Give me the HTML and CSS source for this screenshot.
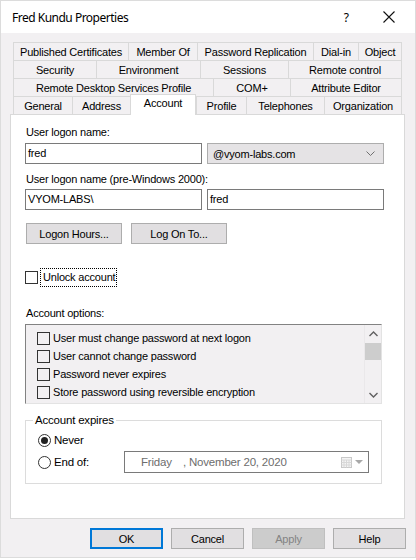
FILE: index.html
```html
<html>
<head>
    <title>Fred Kundu Properties</title>
    <link rel="stylesheet" href="styles.css">
</head>
<body>
<div class="window">
    <div class="titlebar">
        <span class="title">Fred Kundu Properties</span>
        <span class="help-btn">?</span>
        <span class="close-btn">
            <svg width="12" height="12" viewBox="0 0 12 12"><path d="M0.5 0.5 L11.5 11.5 M11.5 0.5 L0.5 11.5" stroke="#111" stroke-width="1.1" fill="none"/></svg>
        </span>
    </div>

    <div class="client">
        <div class="tabs">
            <div class="tab-row">
                <div class="tab t-pubcert">Published Certificates</div>
                <div class="tab t-member">Member Of</div>
                <div class="tab t-pwrepl">Password Replication</div>
                <div class="tab t-dialin">Dial-in</div>
                <div class="tab t-object">Object</div>
            </div>
            <div class="tab-row">
                <div class="tab t-security">Security</div>
                <div class="tab t-env">Environment</div>
                <div class="tab t-sessions">Sessions</div>
                <div class="tab t-remote">Remote control</div>
            </div>
            <div class="tab-row">
                <div class="tab t-rdsp">Remote Desktop Services Profile</div>
                <div class="tab t-com">COM+</div>
                <div class="tab t-attr">Attribute Editor</div>
            </div>
            <div class="tab-row">
                <div class="tab t-general">General</div>
                <div class="tab t-address">Address</div>
                <div class="tab t-account selected">Account</div>
                <div class="tab t-profile">Profile</div>
                <div class="tab t-phones">Telephones</div>
                <div class="tab t-org">Organization</div>
            </div>
        </div>

        <div class="panel">
            <div class="label first">User logon name:</div>
            <div class="field-row">
                <div class="textbox">fred</div>
                <div class="combo">
                    <span>@vyom-labs.com</span>
                    <svg width="9" height="5" viewBox="0 0 9 5"><path d="M0.5 0.5 L4.5 4.5 L8.5 0.5" stroke="#707070" fill="none"/></svg>
                </div>
            </div>

            <div class="label second">User logon name (pre-Windows 2000):</div>
            <div class="field-row tight">
                <div class="textbox">VYOM-LABS\</div>
                <div class="textbox">fred</div>
            </div>

            <div class="btn-row">
                <div class="btn">Logon Hours...</div>
                <div class="btn">Log On To...</div>
            </div>

            <div class="unlock">
                <span class="check"></span>
                <span class="focus-text">Unlock account</span>
            </div>

            <div class="label options">Account options:</div>
            <div class="listbox">
                <div class="list-items">
                    <div class="list-item"><span class="check"></span>User must change password at next logon</div>
                    <div class="list-item"><span class="check"></span>User cannot change password</div>
                    <div class="list-item"><span class="check"></span>Password never expires</div>
                    <div class="list-item"><span class="check"></span>Store password using reversible encryption</div>
                </div>
                <div class="scrollbar">
                    <div class="arrow">
                        <svg width="9" height="6" viewBox="0 0 9 6"><path d="M0.5 5 L4.5 1 L8.5 5" stroke="#606060" stroke-width="1.4" fill="none"/></svg>
                    </div>
                    <div class="thumb"></div>
                    <div class="track"></div>
                    <div class="arrow">
                        <svg width="9" height="6" viewBox="0 0 9 6"><path d="M0.5 1 L4.5 5 L8.5 1" stroke="#606060" stroke-width="1.4" fill="none"/></svg>
                    </div>
                </div>
            </div>

            <fieldset class="expires">
                <legend>Account expires</legend>
                <div class="radio-row">
                    <span class="radio on"></span>Never
                </div>
                <div class="radio-row end">
                    <span class="radio"></span><span class="end-label">End of:</span>
                    <div class="datepicker">
                        <span class="day">Friday</span>
                        <span class="date">, November 20, 2020</span>
                        <span class="cal">
                            <svg width="11" height="11" viewBox="0 0 11 11">
                                <rect x="0.5" y="0.5" width="10" height="10" fill="#f4f4f4" stroke="#c8c8c8"/>
                                <path d="M0.5 3 H10.5 M0.5 5.5 H10.5 M0.5 8 H10.5 M3 3 V10.5 M5.5 3 V10.5 M8 3 V10.5" stroke="#d8d8d8" fill="none"/>
                            </svg>
                        </span>
                        <span class="drop"></span>
                    </div>
                </div>
            </fieldset>
        </div>

        <div class="dialog-buttons">
            <div class="btn wide default">OK</div>
            <div class="btn wide">Cancel</div>
            <div class="btn wide disabled">Apply</div>
            <div class="btn wide">Help</div>
        </div>
    </div>
</div>
</body>
</html>
```

FILE: styles.css
```css
*{
    box-sizing: border-box;
}
body{
    margin: 0;
    background: #ffffff;
    font-family: "Liberation Sans", Arial, sans-serif;
    font-size: 11px;
    letter-spacing: -0.2px;
    color: #000;
}
.window{
    width: 416px;
    height: 558px;
    border: 1px solid #dcdcdc;
    display: flex;
    flex-direction: column;
}
.titlebar{
    height: 32px;
    background: #ffffff;
    display: flex;
    align-items: center;
    font-family: "Noto Sans", sans-serif;
    font-size: 12px;
    letter-spacing: -0.5px;
    color: #000;
}
.title{
    margin-left: 11px;
    flex: 1;
}
.help-btn{
    width: 20px;
    margin-right: 27px;
    text-align: center;
}
.close-btn{
    width: 12px;
    height: 12px;
    margin-right: 20px;
    display: flex;
}
.client{
    flex: 1;
    background: #f2f0f2;
    padding-top: 9px;
    display: flex;
    flex-direction: column;
}

/* tab strip */
.tabs{
    margin-left: 12px;
    width: 389px;
}
.tab-row{
    display: flex;
    height: 18px;
}
.tab{
    height: 18px;
    border-top: 1px solid #d9d9d9;
    border-left: 1px solid #d9d9d9;
    display: flex;
    align-items: center;
    justify-content: center;
    white-space: nowrap;
}
.tab:last-child{
    border-right: 1px solid #d9d9d9;
}
.t-pubcert{ width: 115px; }
.t-member{ width: 69px; }
.t-pwrepl{ width: 116px; }
.t-dialin{ width: 45px; }
.t-object{ width: 44px; }
.t-security{ width: 83px; }
.t-env{ width: 104px; }
.t-sessions{ width: 88px; }
.t-remote{ width: 114px; }
.t-rdsp{ width: 200px; }
.t-com{ width: 77px; }
.t-attr{ width: 112px; }
.t-general{ width: 59px; }
.t-address{ width: 58px; }
.t-account{ width: 66px; }
.t-profile{ width: 50px; }
.t-phones{ width: 78px; }
.t-org{ width: 78px; }
.tab.selected{
    position: relative;
    z-index: 1;
    background: #ffffff;
    height: 21px;
    margin-top: -2px;
    border-right: 1px solid #d9d9d9;
    align-items: flex-start;
    padding-top: 2px;
}

/* account page */
.panel{
    margin-left: 9px;
    width: 395px;
    height: 405px;
    background: #ffffff;
    border: 1px solid #d9d9d9;
    padding-left: 14px;
}
.label{
    line-height: 13px;
    padding-left: 1px;
}
.label.first{ margin-top: 11px; }
.label.second{ margin-top: 9px; }
.label.options{ margin-top: 20px; }
.field-row{
    display: flex;
    gap: 5px;
    margin-top: 4px;
}
.field-row.tight{
    margin-top: 3px;
}
.textbox{
    width: 177px;
    height: 21px;
    border: 1px solid #7a7a7a;
    background: #ffffff;
    padding-left: 2px;
    line-height: 19px;
}
.combo{
    width: 177px;
    height: 21px;
    border: 1px solid #adadad;
    background: #e5e3e5;
    padding: 0 8px 0 5px;
    display: flex;
    align-items: center;
    justify-content: space-between;
}
.btn-row{
    display: flex;
    gap: 9px;
    margin-top: 13px;
    padding-left: 1px;
}
.btn{
    width: 96px;
    height: 21px;
    border: 1px solid #adadad;
    background: #e1dfe1;
    display: flex;
    align-items: center;
    justify-content: center;
}
.unlock{
    display: flex;
    align-items: center;
    margin-top: 24px;
    height: 19px;
}
.check{
    width: 13px;
    height: 13px;
    border: 1px solid #333333;
    flex: none;
}
.focus-text{
    margin-left: 2px;
    padding: 2px 1px 2px 2px;
    border: 1px dotted #000;
    line-height: 13px;
}
.listbox{
    margin-top: 4px;
    width: 357px;
    height: 80px;
    background: #f2f0f2;
    border-top: 1px solid #828282;
    border-left: 1px solid #828282;
    border-right: 1px solid #e3e3e3;
    border-bottom: 1px solid #e3e3e3;
    display: flex;
}
.list-items{
    flex: 1;
    padding: 4px 0 0 11px;
}
.list-item{
    height: 18px;
    display: flex;
    align-items: center;
}
.list-item .check{
    margin-right: 3px;
}
.scrollbar{
    width: 17px;
    border-left: 1px solid #eae8ea;
    display: flex;
    flex-direction: column;
}
.arrow{
    height: 17px;
    display: flex;
    align-items: center;
    justify-content: center;
}
.thumb{
    height: 17px;
    margin-top: 1px;
    background: #cdcdcd;
}
.track{
    flex: 1;
}
.expires{
    margin: 10px 0 0 0;
    width: 357px;
    height: 70px;
    border: 1px solid #dcdcdc;
    padding: 4px 0 0 12px;
}
.expires legend{
    padding: 0 2px;
    margin-left: -5px;
    line-height: 13px;
    font-size: 11.5px;
}
.radio-row{
    display: flex;
    align-items: center;
    height: 18px;
    font-size: 11.5px;
}
.radio-row.end{
    height: 22px;
    margin-top: 2px;
}
.radio{
    width: 13px;
    height: 13px;
    border: 1px solid #333333;
    border-radius: 50%;
    margin-right: 3px;
    display: flex;
    align-items: center;
    justify-content: center;
}
.radio.on::after{
    content: "";
    width: 7px;
    height: 7px;
    border-radius: 50%;
    background: #222;
}
.end-label{
    width: 70px;
}
.datepicker{
    width: 245px;
    height: 22px;
    border: 1px solid #7a7a7a;
    display: flex;
    align-items: center;
    color: #6d6d6d;
    font-size: 11.5px;
    padding-left: 16px;
}
.day{
    width: 42px;
}
.date{
    flex: 1;
}
.cal{
    display: flex;
    margin-right: 3px;
}
.drop{
    width: 0;
    height: 0;
    border-left: 4px solid transparent;
    border-right: 4px solid transparent;
    border-top: 4px solid #a8a8a8;
    margin-right: 5px;
}

/* OK / Cancel / Apply / Help */
.dialog-buttons{
    display: flex;
    gap: 8px;
    margin-top: 9px;
    margin-left: 89px;
}
.btn.wide{
    width: 73px;
}
.btn.default{
    border: 2px solid #0078d7;
}
.btn.disabled{
    background: #cccccc;
    border-color: #bfbfbf;
    color: #838383;
}
```
